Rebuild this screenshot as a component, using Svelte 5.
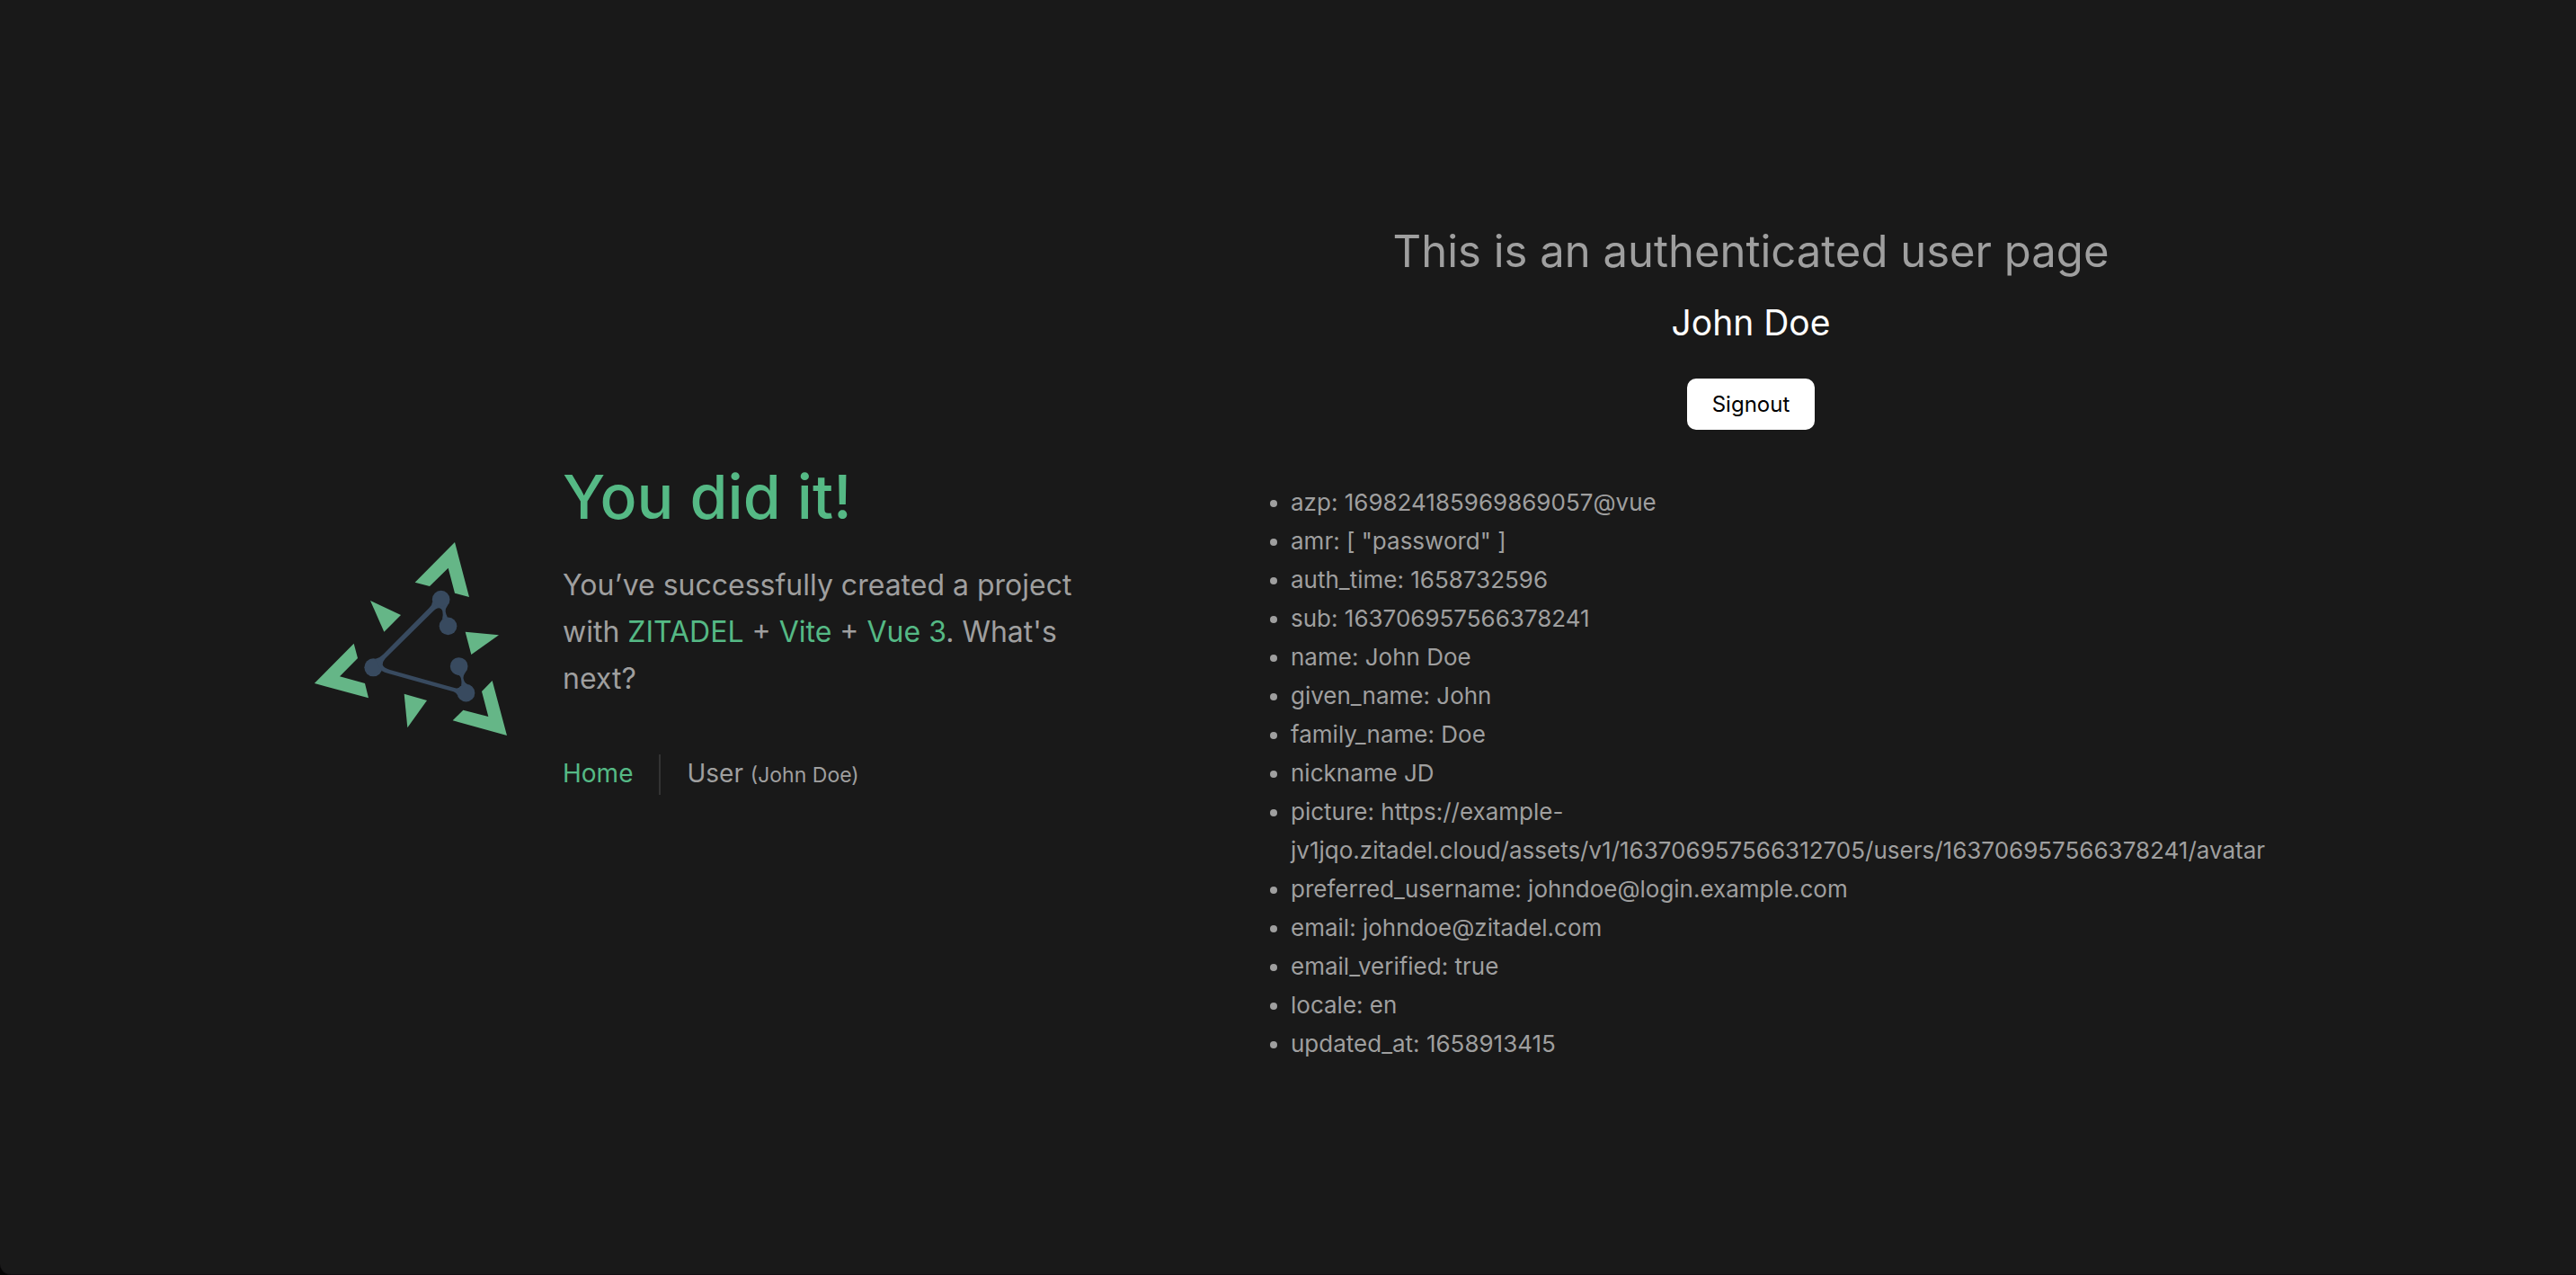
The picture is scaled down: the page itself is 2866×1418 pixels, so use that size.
<script>
  const user = { name: 'John Doe' };

  const claims = [
    'azp: 169824185969869057@vue',
    'amr: [ "password" ]',
    'auth_time: 1658732596',
    'sub: 163706957566378241',
    'name: John Doe',
    'given_name: John',
    'family_name: Doe',
    'nickname JD',
    'picture: https://example-jv1jqo.zitadel.cloud/assets/v1/163706957566312705/users/163706957566378241/avatar',
    'preferred_username: johndoe@login.example.com',
    'email: johndoe@zitadel.com',
    'email_verified: true',
    'locale: en',
    'updated_at: 1658913415'
  ];
</script>

<div class="page">
  <header>
    <svg class="logo" viewBox="60 69 642 645" role="img" aria-label="ZITADEL">
      <g fill="#65b687">
        <path d="M528 69 576 252 528 239 506 155 444 216 395 203Z" />
        <path d="M191 407 204 456 144 517 228 540 240 589 59 540Z" />
        <path d="M653 531 702 714 521 664 556 629 640 651 618 567Z" />
        <path d="M246 264 348 312 292 368Z" />
        <path d="M563 368 675 379 583 444Z" />
        <path d="M359 575 435 597 370 688Z" />
      </g>
      <g fill="#384a5f">
        <circle cx="482" cy="260" r="29.5" />
        <circle cx="505.5" cy="349" r="29.5" />
        <circle cx="256" cy="487" r="30" />
        <circle cx="542" cy="483" r="29.5" />
        <circle cx="565.5" cy="572" r="29.5" />
        <path d="M453 267Q454 278 442 289L289 443Q276 456 262 459L284 498Q293 504 306 507L524 568Q533 571 537 579L549 550Q541 558 530 556L312 495Q290 489 287 478Q287 467 297 456L453 302Q466 289 475 289Z" />
        <path d="M472 287Q484 288 487 299Q490 312 486 327L504 320Q498 310 497 300Q496 290 505 278Z" />
        <path d="M533 511Q544 511 548 521Q552 534 549 548L570 543Q560 538 557 525Q555 515 563 504Z" />
      </g>
    </svg>

    <div class="intro">
      <h1>You did it!</h1>
      <p>
        You’ve successfully created a project with
        <a href="#zitadel">ZITADEL</a> + <a href="#vite">Vite</a> + <a href="#vue">Vue 3</a>. What's next?
      </p>
      <nav>
        <a href="#home">Home</a>
        <a class="current" href="#user">User <small>({user.name})</small></a>
      </nav>
    </div>
  </header>

  <main>
    <h2>This is an authenticated user page</h2>
    <p class="name">{user.name}</p>
    <button type="button">Signout</button>
    <ul>
      {#each claims as claim}
        <li>{claim}</li>
      {/each}
    </ul>
  </main>
</div>

<style>
  :global(body) {
    background: #050505;
  }

  .page {
    box-sizing: border-box;
    min-height: 100vh;
    padding: 36px 0 32px 24px;
    display: flex;
    align-items: center;
    justify-content: center;
    gap: 130px;
    background: #191919;
    border-bottom: 1px solid #120e12;
    border-bottom-left-radius: 12px;
    color: #9f9f9f;
    font-family: Inter, "Liberation Sans", sans-serif;
    font-size: 26px;
    line-height: 43px;
  }

  a {
    color: #55b985;
    text-decoration: none;
  }

  header {
    display: flex;
    align-items: center;
    gap: 62px;
    flex: 0 1 876px;
  }

  .logo {
    width: 214px;
    flex: none;
  }

  .intro {
    flex: 1;
    padding-bottom: 30px;
  }

  h1 {
    margin: 0;
    color: #55b985;
    font-size: 68px;
    font-weight: 500;
    line-height: 88px;
  }

  .intro p {
    margin: 29px 0 58px;
    font-size: 32px;
    line-height: 52px;
  }

  nav {
    display: flex;
    font-size: 28px;
  }

  nav a + a {
    margin-left: 29px;
    padding-left: 29px;
    border-left: 2px solid #333;
  }

  nav .current {
    color: #9f9f9f;
  }

  small {
    font-size: 23px;
  }

  main {
    flex: 0 1 1184px;
    display: flex;
    flex-direction: column;
    align-items: center;
  }

  h2 {
    margin: 0;
    font-size: 49px;
    font-weight: 400;
    line-height: 80px;
  }

  .name {
    margin: 0;
    color: #fff;
    font-size: 39px;
    line-height: 77px;
  }

  button {
    margin: 24px 0 59px;
    padding: 0 28px;
    height: 57px;
    border: 0;
    border-radius: 10px;
    background: #fff;
    color: #000;
    font: inherit;
    font-size: 24px;
  }

  ul {
    box-sizing: border-box;
    width: 100%;
    margin: 0;
    padding: 0 0 0 80px;
  }
</style>
